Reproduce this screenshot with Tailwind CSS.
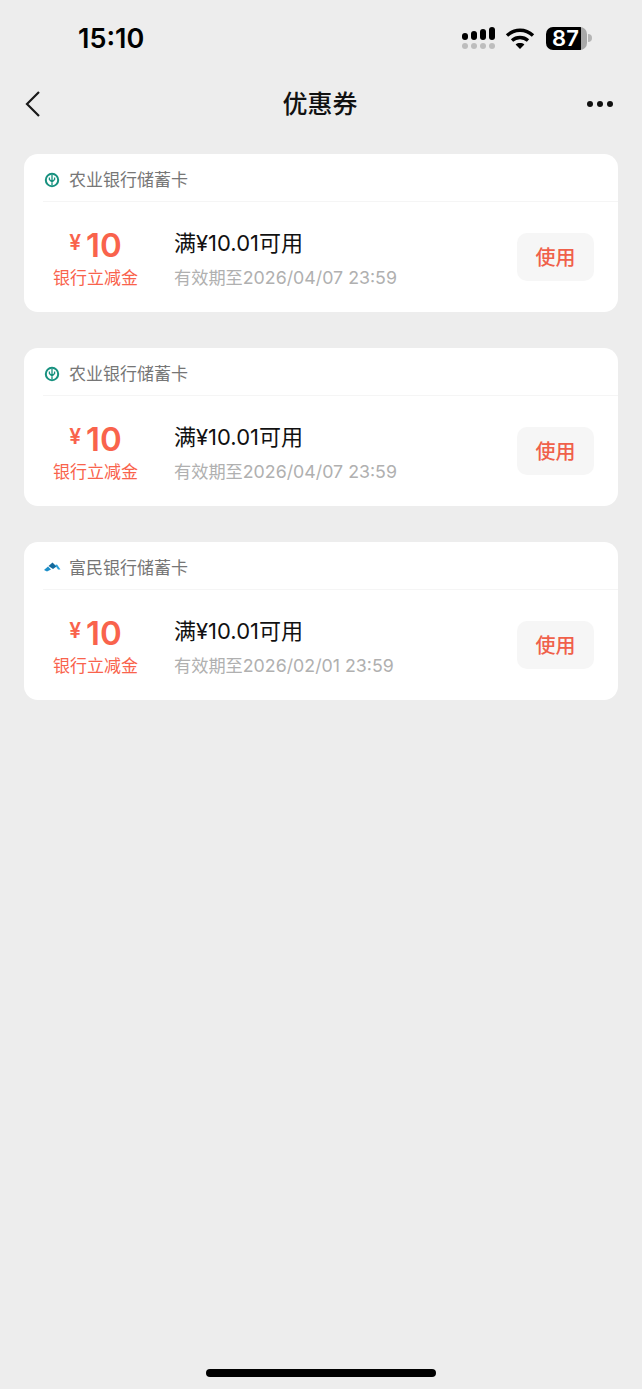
<!DOCTYPE html>
<html lang="en">
<head>
    <meta charset="UTF-8" />
    <meta name="viewport" content="width=device-width, initial-scale=1" />
    <title>优惠券</title>
    <script src="https://cdn.jsdelivr.net/npm/@tailwindcss/browser@4"></script>
</head>
<body class="bg-[#ededed] min-h-screen font-['Inter','Noto_Sans_CJK_SC',sans-serif]">
<div class="w-[642px] h-[1389px] flex flex-col relative overflow-hidden">
    <!-- status bar -->
    <div class="h-[76px] shrink-0 flex items-center justify-between pl-[78px] pr-[50px]">
        <span class="text-[27px] leading-none font-semibold text-black">15:10</span>
        <div class="flex items-center">
            <svg width="34" height="24" viewBox="0 0 34 24" class="block">
                <rect x="0" y="7" width="6" height="7" rx="3" fill="#000"/>
                <rect x="9" y="5" width="6" height="9" rx="3" fill="#000"/>
                <rect x="18" y="3" width="6" height="11" rx="3" fill="#000"/>
                <rect x="27" y="1" width="6" height="13" rx="3" fill="#000"/>
                <circle cx="3" cy="20" r="3" fill="#bdbdbd"/>
                <circle cx="12" cy="20" r="3" fill="#bdbdbd"/>
                <circle cx="21" cy="20" r="3" fill="#bdbdbd"/>
                <circle cx="30" cy="20" r="3" fill="#bdbdbd"/>
            </svg>
            <svg width="30" height="24" viewBox="0 0 30 24" class="block ml-[9px]" fill="none" stroke="#000" stroke-width="3.4">
                <path d="M2 9.5 C9.5 2.5 20.5 2.5 28 9.5"/>
                <path d="M7 14.5 C11.5 10.5 18.5 10.5 23 14.5"/>
                <path d="M15 23 L10.6 18.4 C13 16.6 17 16.6 19.4 18.4 Z" fill="#000" stroke="none"/>
            </svg>
            <div class="ml-[11px] w-[41px] h-[23px] rounded-[7px] bg-[linear-gradient(to_right,#000_0,#000_35px,#a8a8a8_35px)] flex items-center justify-center">
                <span class="text-[22px] leading-none font-semibold text-white pr-[2px]">87</span>
            </div>
            <div class="ml-[1px] w-[4px] h-[8px] rounded-r-full bg-[#b5b5b5]"></div>
        </div>
    </div>

    <!-- nav bar -->
    <div class="h-[56px] shrink-0 flex items-center justify-between pl-[24px] pr-[28px]">
        <div class="w-[29px]">
            <svg width="18" height="28" viewBox="0 0 18 28" fill="none" stroke="#1a1a1a" stroke-width="2.2" class="block">
                <path d="M15 2 L3 14 L15 26"/>
            </svg>
        </div>
        <span class="text-[25px] leading-none font-medium text-[#111]">优惠券</span>
        <div class="flex gap-[4px] w-[27px]">
            <span class="w-[6px] h-[6px] rounded-full bg-[#111]"></span>
            <span class="w-[6px] h-[6px] rounded-full bg-[#111]"></span>
            <span class="w-[6px] h-[6px] rounded-full bg-[#111]"></span>
        </div>
    </div>

    <div class="flex flex-col gap-[36px] px-[24px] pt-[22px]">
        <!-- card 1 -->
        <div class="h-[158px] bg-white rounded-[14px] pl-[19px]">
            <div class="h-[48px] pt-[6px] flex items-center border-b border-[#f5f5f5]">
                <svg width="18" height="18" viewBox="0 0 18 18" fill="none" class="block -mt-[2px]">
                    <circle cx="9" cy="9" r="6.2" stroke="#17917f" stroke-width="2"/>
                    <path d="M9 4 V14 M6.4 6.5 V8.5 L9 11 L11.6 8.5 V6.5" stroke="#17917f" stroke-width="1.3"/>
                </svg>
                <span class="ml-[8px] text-[17px] leading-none text-[#767676]">农业银行储蓄卡</span>
            </div>
            <div class="h-[110px] flex items-center">
                <div class="w-[103px] ml-[1px] mt-[1px] flex flex-col items-center">
                    <div class="flex items-center h-[34px] text-[#f9634c]">
                        <span class="text-[21px] leading-none font-semibold -mt-[5px]">¥</span>
                        <span class="ml-[5px] text-[33px] leading-none font-semibold">10</span>
                    </div>
                    <span class="mt-[8px] text-[17px] leading-none text-[#f9634c]">银行立减金</span>
                </div>
                <div class="ml-[27px] flex-1 flex flex-col mt-[5px]">
                    <span class="text-[22px] leading-none text-[#111]">满¥10.01可用</span>
                    <span class="mt-[15px] text-[17.8px] leading-none text-[#b0b0b0]"><span class="text-[17.2px]">有效期至</span>2026/04/07 23:59</span>
                </div>
                <div class="w-[77px] h-[48px] pt-[1px] mr-[24px] rounded-[10px] bg-[#f6f6f6] flex items-center justify-center text-[20px] font-medium text-[#f0604a]">使用</div>
            </div>
        </div>

        <!-- card 2 -->
        <div class="h-[158px] bg-white rounded-[14px] pl-[19px]">
            <div class="h-[48px] pt-[6px] flex items-center border-b border-[#f5f5f5]">
                <svg width="18" height="18" viewBox="0 0 18 18" fill="none" class="block -mt-[2px]">
                    <circle cx="9" cy="9" r="6.2" stroke="#17917f" stroke-width="2"/>
                    <path d="M9 4 V14 M6.4 6.5 V8.5 L9 11 L11.6 8.5 V6.5" stroke="#17917f" stroke-width="1.3"/>
                </svg>
                <span class="ml-[8px] text-[17px] leading-none text-[#767676]">农业银行储蓄卡</span>
            </div>
            <div class="h-[110px] flex items-center">
                <div class="w-[103px] ml-[1px] mt-[1px] flex flex-col items-center">
                    <div class="flex items-center h-[34px] text-[#f9634c]">
                        <span class="text-[21px] leading-none font-semibold -mt-[5px]">¥</span>
                        <span class="ml-[5px] text-[33px] leading-none font-semibold">10</span>
                    </div>
                    <span class="mt-[8px] text-[17px] leading-none text-[#f9634c]">银行立减金</span>
                </div>
                <div class="ml-[27px] flex-1 flex flex-col mt-[5px]">
                    <span class="text-[22px] leading-none text-[#111]">满¥10.01可用</span>
                    <span class="mt-[15px] text-[17.8px] leading-none text-[#b0b0b0]"><span class="text-[17.2px]">有效期至</span>2026/04/07 23:59</span>
                </div>
                <div class="w-[77px] h-[48px] pt-[1px] mr-[24px] rounded-[10px] bg-[#f6f6f6] flex items-center justify-center text-[20px] font-medium text-[#f0604a]">使用</div>
            </div>
        </div>

        <!-- card 3 -->
        <div class="h-[158px] bg-white rounded-[14px] pl-[19px]">
            <div class="h-[48px] pt-[6px] flex items-center border-b border-[#f5f5f5]">
                <svg width="18" height="18" viewBox="0 0 18 18" class="block -mt-[2px]">
                    <path d="M1 11 L5 7.5 L8 10.5 L4 12.5 Z" fill="#1d8fc9"/>
                    <path d="M5.5 7 L9.5 3.5 L13.5 7.5 L10 10 Z" fill="#13699c"/>
                    <path d="M12 6 L14 5.5 L17.5 10.5 L15 10.5 Z" fill="#2aa0d8"/>
                </svg>
                <span class="ml-[8px] text-[17px] leading-none text-[#767676]">富民银行储蓄卡</span>
            </div>
            <div class="h-[110px] flex items-center">
                <div class="w-[103px] ml-[1px] mt-[1px] flex flex-col items-center">
                    <div class="flex items-center h-[34px] text-[#f9634c]">
                        <span class="text-[21px] leading-none font-semibold -mt-[5px]">¥</span>
                        <span class="ml-[5px] text-[33px] leading-none font-semibold">10</span>
                    </div>
                    <span class="mt-[8px] text-[17px] leading-none text-[#f9634c]">银行立减金</span>
                </div>
                <div class="ml-[27px] flex-1 flex flex-col mt-[5px]">
                    <span class="text-[22px] leading-none text-[#111]">满¥10.01可用</span>
                    <span class="mt-[15px] text-[17.8px] leading-none text-[#b0b0b0]"><span class="text-[17.2px]">有效期至</span>2026/02/01 23:59</span>
                </div>
                <div class="w-[77px] h-[48px] pt-[1px] mr-[24px] rounded-[10px] bg-[#f6f6f6] flex items-center justify-center text-[20px] font-medium text-[#f0604a]">使用</div>
            </div>
        </div>
    </div>

    <!-- home indicator -->
    <div class="absolute bottom-[12px] left-[206px] w-[230px] h-[8px] rounded-full bg-black"></div>
</div>
</body>
</html>
